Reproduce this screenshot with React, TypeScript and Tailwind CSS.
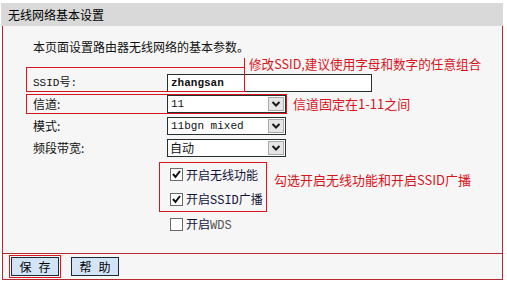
const Chevron = () => (
  <svg width="10" height="8" viewBox="0 0 10 8">
    <polyline points="1.5,2 5,5.5 8.5,2" fill="none" stroke="#1a1a1a" strokeWidth="2" />
  </svg>
);

const Select = ({ value, mono = true }: { value: string; mono?: boolean }) => (
  <div className="flex items-center w-[119px] h-[18px] bg-white border border-[#24302e]">
    <span
      className={
        mono
          ? "flex-1 pl-[3px] text-[11px] text-[#111] font-['Liberation_Mono','Noto_Sans_CJK_SC',monospace] leading-none"
          : "flex-1 pl-[2px] text-[12px] text-[#111] leading-none"
      }
    >
      {value}
    </span>
    <div className="flex items-center justify-center w-[16px] h-[14px] mr-[1px] bg-[#e6e6e6] border border-[#a8a8a8]">
      <Chevron />
    </div>
  </div>
);

const Checkbox = ({ checked }: { checked: boolean }) => (
  <div className="flex items-center justify-center w-[13px] h-[13px] bg-white border border-[#6a6a6a]">
    {checked && (
      <svg width="11" height="11" viewBox="0 0 11 11">
        <polyline points="2,5 4.5,8 9,2" fill="none" stroke="#111" strokeWidth="2" />
      </svg>
    )}
  </div>
);

const mono = "font-['Liberation_Mono','Noto_Sans_CJK_SC',monospace] text-[11px]";

const Button = ({ a, b }: { a: string; b: string }) => (
  <button className="flex items-center justify-center gap-[7px] w-[48px] h-[19px] bg-[#d4e4f7] border border-[#1c2a38] text-[12px] text-black leading-none">
    <span>{a}</span>
    <span>{b}</span>
  </button>
);

export default function App() {
  return (
    <div className="relative w-[507px] h-[284px] bg-white overflow-hidden font-['Noto_Sans_CJK_SC',sans-serif] text-[12px] text-[#111]">
      {/* HEADER */}
      <div className="mt-[3px] ml-[1px] w-[502px] h-[23px] flex items-center pl-[7px] bg-[#d9d9d9] text-[12px] text-black">
        无线网络基本设置
      </div>

      {/* FRAME */}
      <div className="ml-[2px] w-[501px] bg-[#f6f6f6] border-x border-b border-[#b52a2e]">
        <div className="h-[228px] border-b border-[#b52a2e] pl-[30px] pt-[12px] flex flex-col">
          <div className="h-[18px] flex items-center">本页面设置路由器无线网络的基本参数。</div>

          {/* FORM ROWS */}
          <div className="mt-[18px] h-[18px] flex items-center">
            <div className={`w-[134px] ${mono}`}>SSID号:</div>
            <div className={`flex items-center w-[205px] h-[18px] bg-white border border-[#24302e] pl-[3px] ${mono} font-semibold`}>
              zhangsan
            </div>
          </div>

          <div className="mt-[3px] h-[18px] flex items-center">
            <div className="w-[134px]">信道:</div>
            <Select value="11" />
            <span className="ml-[7px] text-[13px] text-[#d8141c]">信道固定在1-11之间</span>
          </div>

          <div className="mt-[4px] h-[18px] flex items-center">
            <div className="w-[134px]">模式:</div>
            <Select value="11bgn mixed" />
          </div>

          <div className="mt-[4px] h-[18px] flex items-center">
            <div className="w-[134px]">频段带宽:</div>
            <Select value="自动" mono={false} />
          </div>

          {/* CHECKBOXES */}
          <div className="mt-[5px] pl-[137px] flex flex-col text-[#14143a]">
            <div className="h-[25px] flex items-center gap-[3px]">
              <Checkbox checked />
              <span>开启无线功能</span>
            </div>
            <div className="h-[25px] flex items-center gap-[3px]">
              <Checkbox checked />
              <span>
                开启<span className={`${mono} text-[12px]`}>SSID</span>广播
              </span>
            </div>
            <div className="h-[25px] flex items-center gap-[3px]">
              <Checkbox checked={false} />
              <span>
                开启<span className={`${mono} text-[12px] text-[#555]`}>WDS</span>
              </span>
            </div>
          </div>
        </div>

        {/* BUTTONS */}
        <div className="h-[25px] flex items-center pl-[6px] gap-[10px]">
          <div className="p-[1px] border border-[#d8141c]">
            <Button a="保" b="存" />
          </div>
          <Button a="帮" b="助" />
        </div>
      </div>

      {/* ANNOTATIONS */}
      <div className="absolute left-[26px] top-[67px] w-[219px] h-[25px] border border-[#d8141c]"></div>
      <div className="absolute left-[244px] top-[58px] w-px h-[9px] bg-[#d8141c]"></div>
      <div className="absolute left-[249px] top-[55px] text-[12.6px] leading-[18px] text-[#d8141c]">
        修改SSID,建议使用字母和数字的任意组合
      </div>
      <div className="absolute left-[26px] top-[94px] w-[261px] h-[20px] border border-[#d8141c]"></div>
      <div className="absolute left-[159px] top-[162px] w-[108px] h-[50px] border border-[#d8141c]"></div>
      <div className="absolute left-[274px] top-[171px] text-[13px] leading-[18px] text-[#d8141c]">
        勾选开启无线功能和开启SSID广播
      </div>
    </div>
  );
}
